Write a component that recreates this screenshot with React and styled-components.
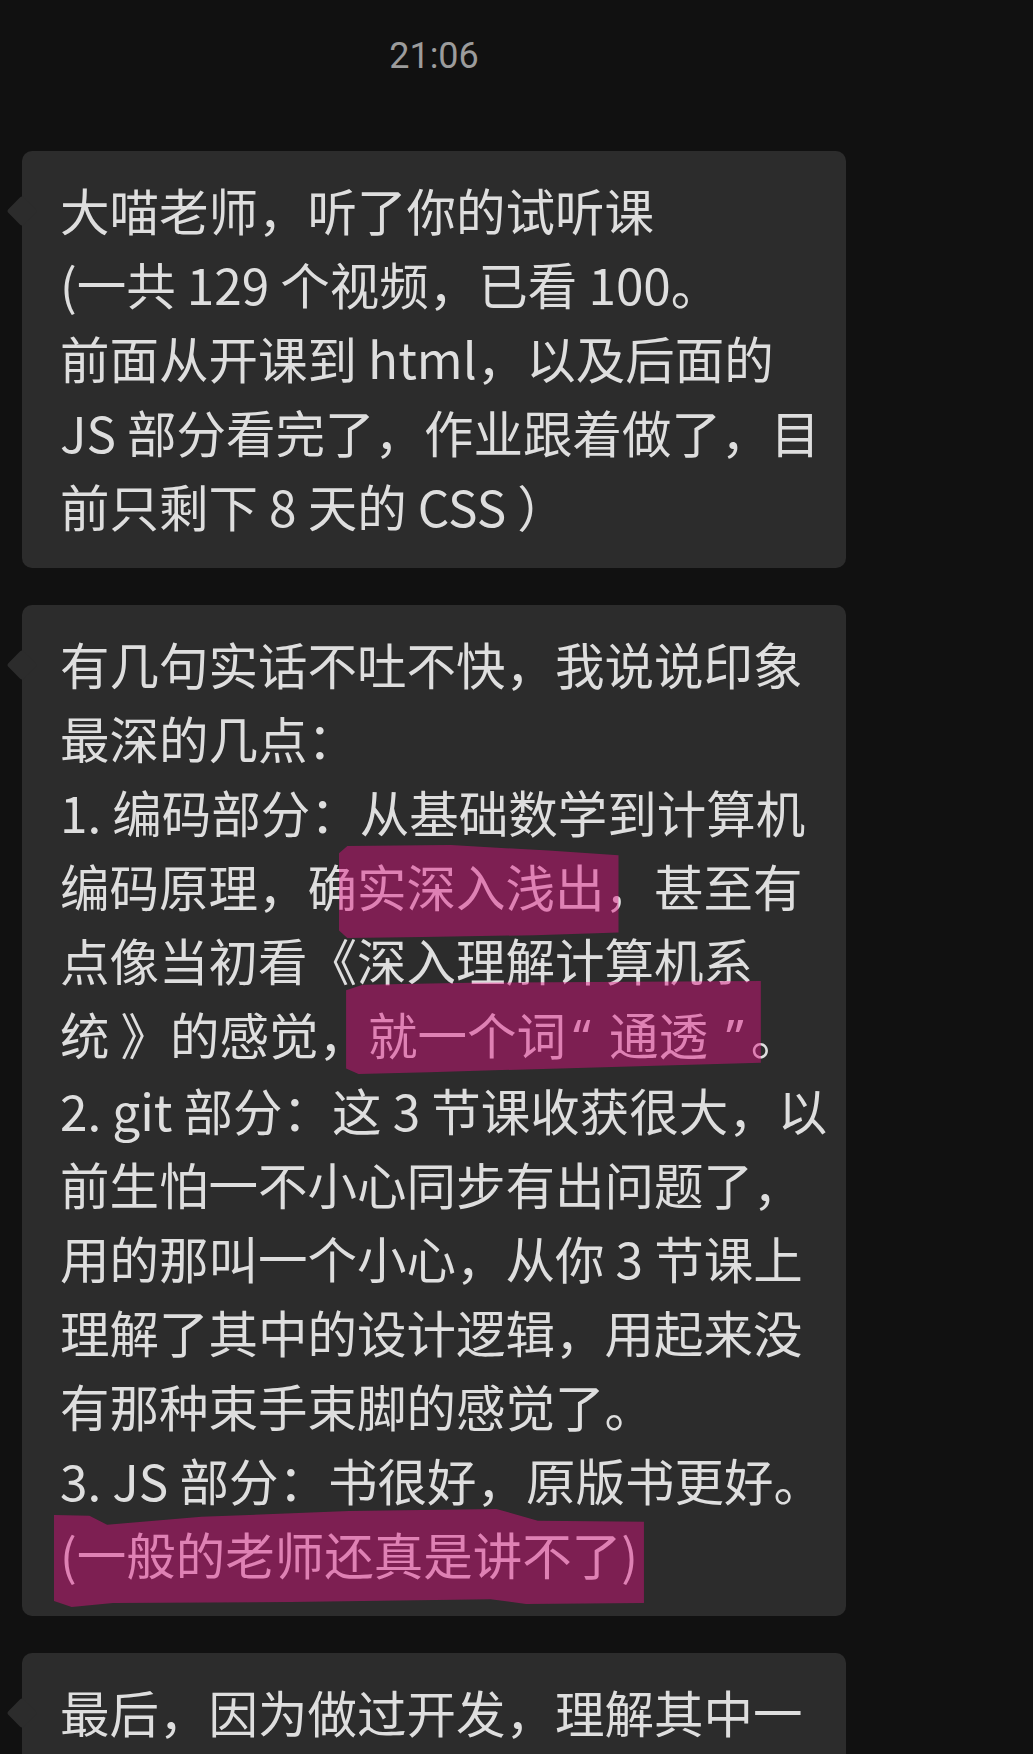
import React from 'react'
import styled, { createGlobalStyle } from 'styled-components'

const GlobalStyle = createGlobalStyle`
  html, body {
    margin: 0;
    padding: 0;
    background: #111111;
  }
  body {
    overflow: hidden;
  }
`

const Page = styled.div`
  min-height: 100vh;
  background: #111111;
  font-family: 'Noto Sans CJK SC', 'Noto Sans', sans-serif;
`

const Thread = styled.div`
  display: flex;
  flex-direction: column;
  gap: 37px;
  width: 824px;
  margin-left: 22px;
`

const TimeStamp = styled.div`
  padding-top: 36px;
  margin-bottom: 38px;
  text-align: center;
  font-family: Roboto, 'Noto Sans', sans-serif;
  font-size: 36px;
  line-height: 40px;
  color: #9c9c9c;
`

const Bubble = styled.div`
  position: relative;
  background: #2c2c2c;
  border-radius: 10px;
  padding: 22px 30px 25px 38px;
  font-size: 49.5px;
  line-height: 74px;
  color: #dedede;
  // 左侧小尖角
  &::before {
    content: '';
    position: absolute;
    left: -11px;
    top: 49px;
    width: 22px;
    height: 22px;
    background: #2c2c2c;
    border-radius: 3px;
    transform: rotate(45deg);
  }
`

const Line = styled.div`
  white-space: nowrap;
`

// 西文引号，比全角的窄
const Quote = styled.span`
  font-family: 'Noto Sans', sans-serif;
  padding: 0 7px;
`

// 截图上的荧光笔涂抹
const Mark = styled.span`
  position: relative;
  &::after {
    content: '';
    position: absolute;
    top: ${({ $top }) => $top}px;
    bottom: ${({ $bottom }) => $bottom}px;
    left: ${({ $left }) => $left}px;
    right: ${({ $right }) => $right}px;
    background: rgba(224, 15, 128, 0.45);
    clip-path: ${({ $clip }) => $clip};
    pointer-events: none;
  }
`

const clips = {
  one: 'polygon(0 9%, 3% 1%, 40% 0, 75% 6%, 100% 11%, 100% 94%, 70% 97%, 30% 99%, 3% 100%, 0 92%)',
  two: 'polygon(0 10%, 4% 4%, 30% 2%, 60% 1%, 100% 0, 100% 88%, 60% 93%, 20% 98%, 3% 100%, 0 94%)',
  three:
    'polygon(0 6%, 6% 7%, 9% 16%, 25% 8%, 50% 2%, 75% 0, 82% 12%, 100% 13%, 100% 96%, 80% 97%, 74% 92%, 40% 95%, 10% 96%, 3% 100%, 0 94%)',
}

const first = [
  '大喵老师，听了你的试听课',
  '(一共 129 个视频，已看 100。',
  '前面从开课到 html，以及后面的',
  'JS 部分看完了，作业跟着做了，目',
  '前只剩下 8 天的 CSS ）',
]

const App = () => (
  <Page>
    <GlobalStyle />
    <Thread>
      <TimeStamp>21:06</TimeStamp>

      <Bubble>
        {first.map(text => (
          <Line key={text}>{text}</Line>
        ))}
      </Bubble>

      <Bubble>
        <Line>有几句实话不吐不快，我说说印象</Line>
        <Line>最深的几点：</Line>
        <Line>1. 编码部分：从基础数学到计算机</Line>
        <Line>
          编码原理，确
          <Mark $top={-5} $bottom={-17} $left={-18} $right={-14} $clip={clips.one}>
            实深入浅出
          </Mark>
          ，甚至有
        </Line>
        <Line>点像当初看《深入理解计算机系</Line>
        <Line>
          统 》的感觉，
          <Mark $top={-17} $bottom={-5} $left={-22} $right={-10} $clip={clips.two}>
            就一个词<Quote>“</Quote> 通透 <Quote>”</Quote>
          </Mark>
          。
        </Line>
        <Line>2. git 部分：这 3 节课收获很大，以</Line>
        <Line>前生怕一不小心同步有出问题了，</Line>
        <Line>用的那叫一个小心，从你 3 节课上</Line>
        <Line>理解了其中的设计逻辑，用起来没</Line>
        <Line>有那种束手束脚的感觉了。</Line>
        <Line>3. JS 部分：书很好，原版书更好。</Line>
        <Line>
          <Mark $top={-9} $bottom={-18} $left={-6} $right={-6} $clip={clips.three}>
            (一般的老师还真是讲不了)
          </Mark>
        </Line>
      </Bubble>

      <Bubble>
        <Line>最后，因为做过开发，理解其中一</Line>
      </Bubble>
    </Thread>
  </Page>
)

export default App
